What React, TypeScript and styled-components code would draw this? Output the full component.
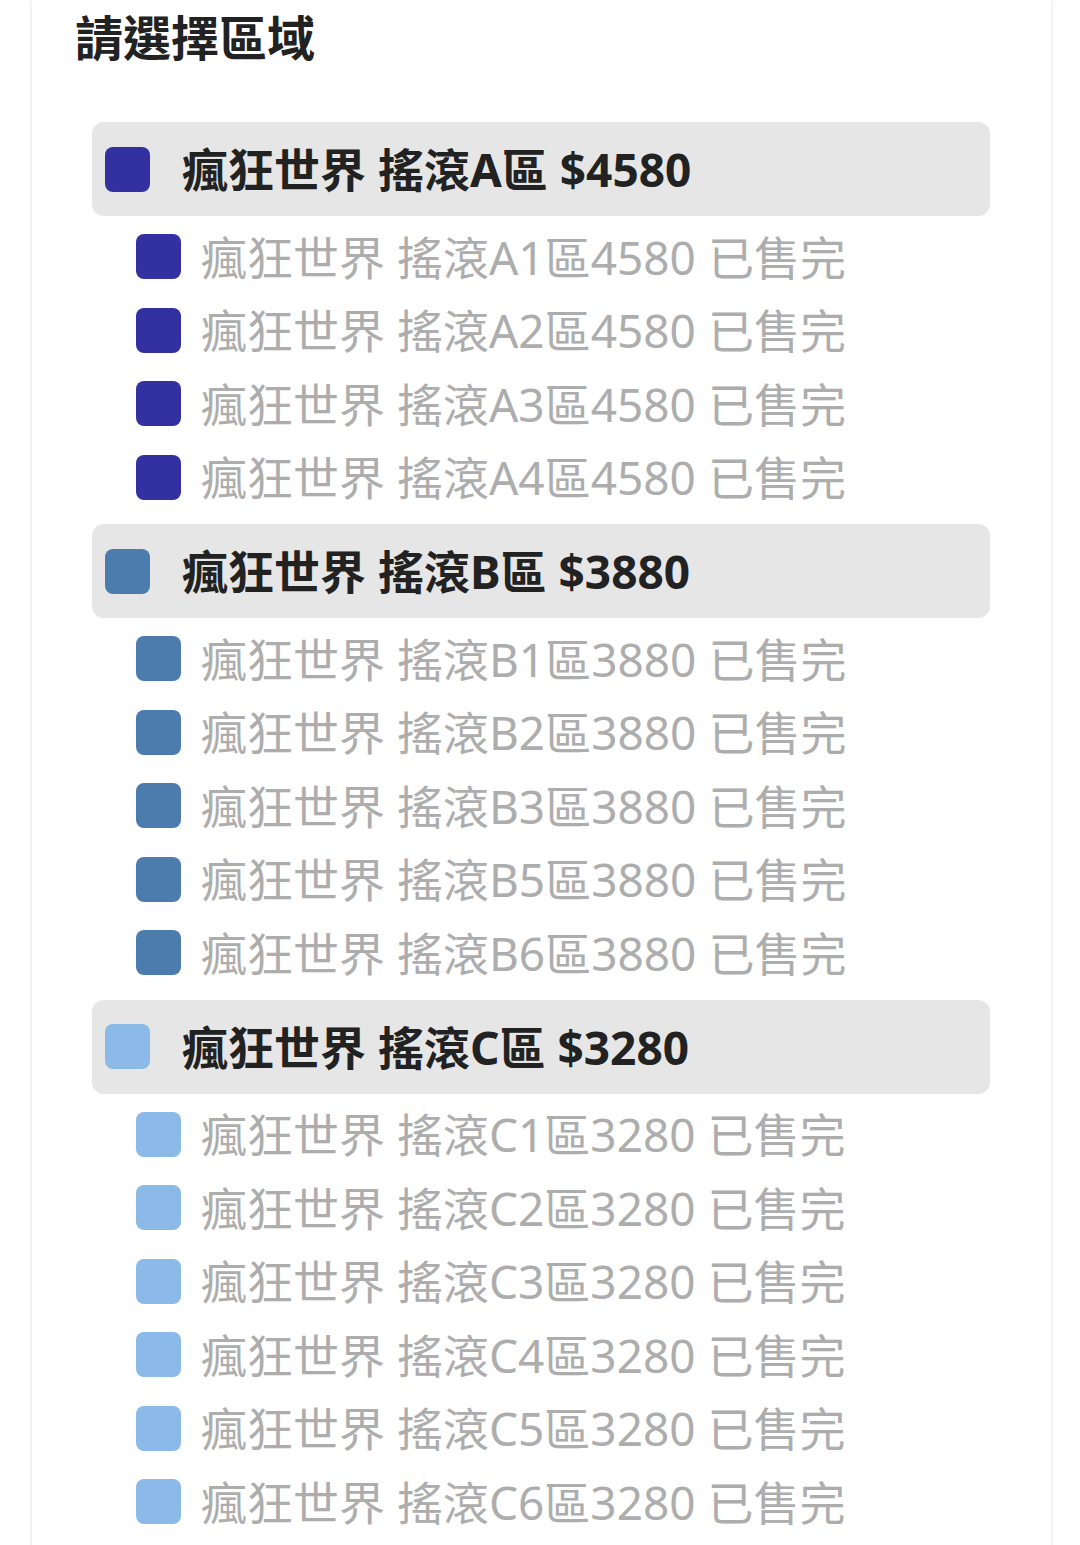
import { createGlobalStyle } from 'styled-components'
import styled from 'styled-components'

const GlobalStyle = createGlobalStyle`
  html, body {
    margin: 0;
    padding: 0;
    background: #ffffff;
  }
  body {
    font-family: "Noto Sans", "Noto Sans CJK TC", sans-serif;
  }
`

interface Zone {
  code: string
  color: string
  price: number
  subs: string[]
}

const zones: Zone[] = [
  { code: 'A', color: '#3331a1', price: 4580, subs: ['A1', 'A2', 'A3', 'A4'] },
  { code: 'B', color: '#4c7bae', price: 3880, subs: ['B1', 'B2', 'B3', 'B5', 'B6'] },
  { code: 'C', color: '#8bb9e8', price: 3280, subs: ['C1', 'C2', 'C3', 'C4', 'C5', 'C6'] }
]

const App = () => (
  <>
    <GlobalStyle />
    <Page>
      <Card>
        <Title>請選擇區域</Title>
        <ZoneList>
          {zones.map((zone) => (
            <ZoneGroup key={zone.code}>
              <GroupHeader>
                <Swatch color={zone.color} />
                <GroupLabel>
                  瘋狂世界 搖滾{zone.code}區 ${zone.price}
                </GroupLabel>
              </GroupHeader>
              {zone.subs.map((sub) => (
                <SubItem key={sub}>
                  <Swatch color={zone.color} />
                  <SubLabel>
                    瘋狂世界 搖滾{sub}區{zone.price} 已售完
                  </SubLabel>
                </SubItem>
              ))}
            </ZoneGroup>
          ))}
        </ZoneList>
      </Card>
    </Page>
  </>
)

export default App

const Page = styled.div`
  padding: 0 29px 0 32px;
  height: 1545px;
  overflow: hidden;
`

const Card = styled.div`
  background: #ffffff;
  box-shadow: 0 0 4px rgba(0, 0, 0, 0.14);
  padding: 8px 0 40px;
  min-height: 1600px;
`

const Title = styled.h2`
  margin: 0;
  padding-left: 43px;
  font-size: 48px;
  line-height: 60px;
  font-weight: 700;
  color: #222222;
`

const ZoneList = styled.div`
  margin: 54px 61px 0 60px;
  display: flex;
  flex-direction: column;
  gap: 10px;
`

const ZoneGroup = styled.div`
  display: flex;
  flex-direction: column;
`

const GroupHeader = styled.div`
  display: flex;
  align-items: center;
  gap: 32px;
  height: 94px;
  padding-left: 13px;
  background: #e6e6e6;
  border-radius: 12px;
  margin-bottom: 4px;
`

const Swatch = styled.span<{ color: string }>`
  flex: none;
  width: 45px;
  height: 45px;
  border-radius: 8px;
  background: ${({ color }) => color};
`

const GroupLabel = styled.span`
  font-size: 46px;
  line-height: 60px;
  font-weight: 700;
  color: #222222;
  white-space: nowrap;
`

const SubItem = styled.div`
  display: flex;
  align-items: center;
  gap: 20px;
  height: 73.5px;
  padding-left: 44px;
`

const SubLabel = styled.span`
  font-size: 46px;
  line-height: 60px;
  font-weight: 400;
  color: #adadad;
  white-space: nowrap;
`
